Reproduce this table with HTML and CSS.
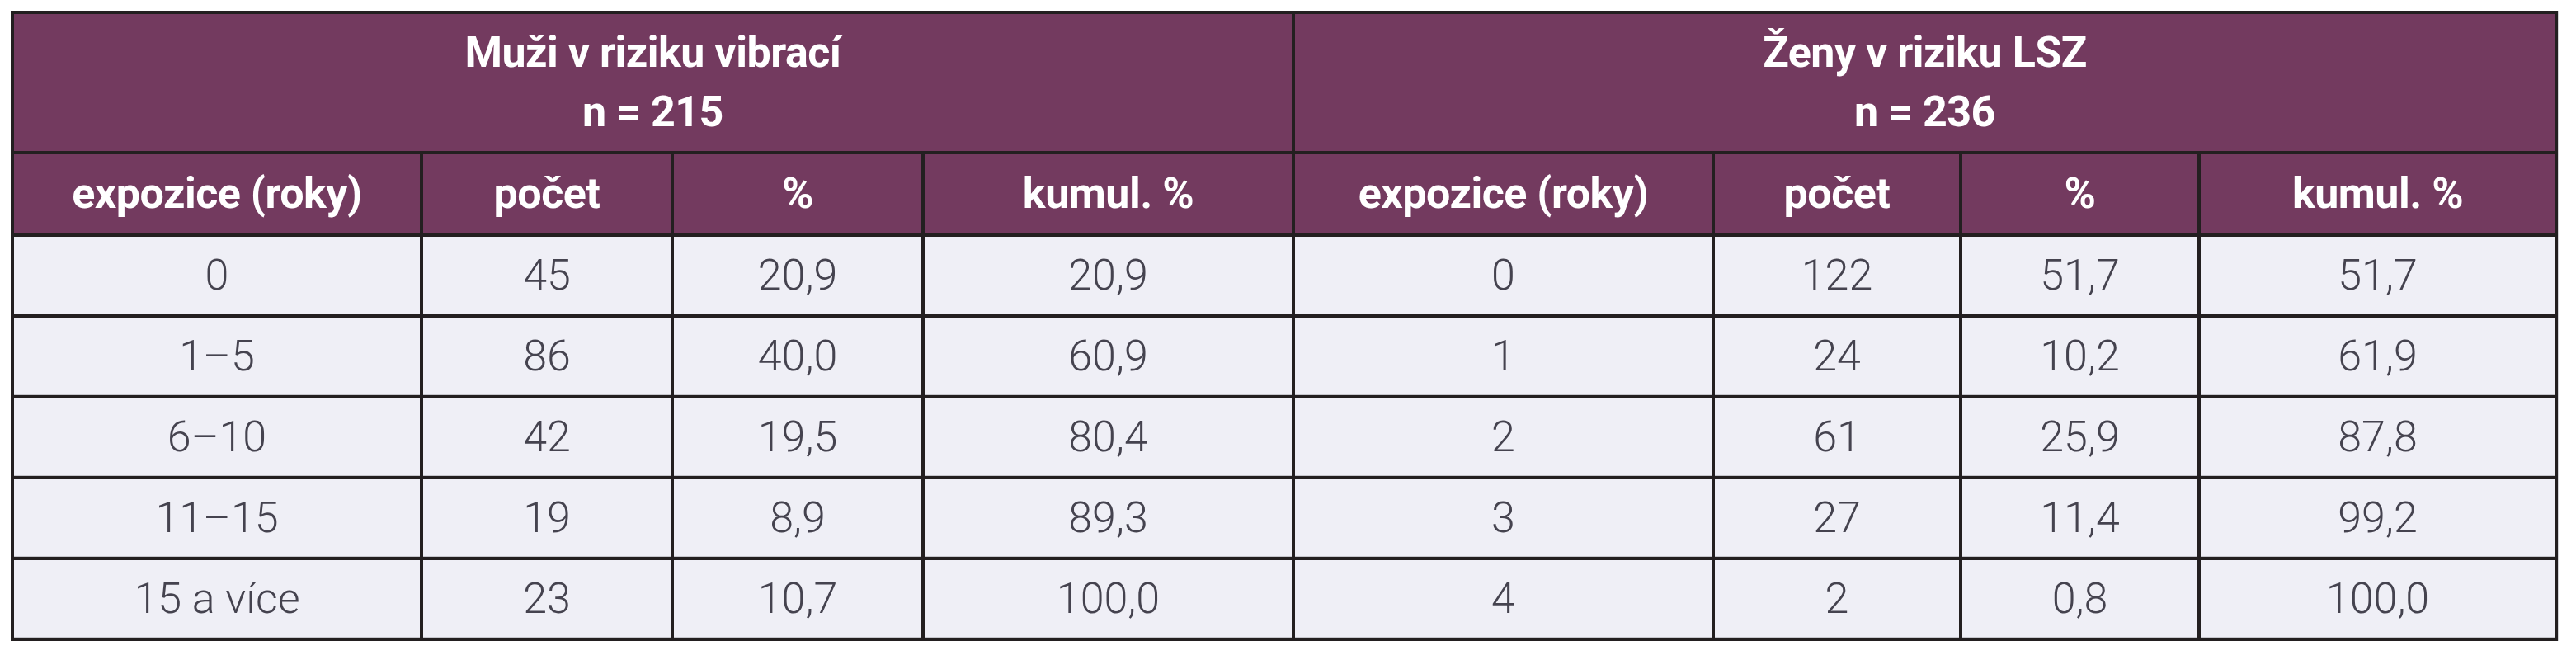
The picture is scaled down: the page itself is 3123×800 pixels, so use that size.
FILE: index.html
```html
<!DOCTYPE html>
<html lang="cs">
<head>
<meta charset="utf-8">
<title>Expozice</title>
<link rel="stylesheet" href="styles.css">
</head>
<body>
<table class="data-table">
  <colgroup>
    <col class="c1"><col class="c2"><col class="c3"><col class="c4">
    <col class="c5"><col class="c6"><col class="c7"><col class="c8">
  </colgroup>
  <thead>
    <tr class="group-row">
      <th colspan="4">Muži v riziku vibrací<br>n = 215</th>
      <th colspan="4">Ženy v riziku LSZ<br>n = 236</th>
    </tr>
    <tr class="head-row">
      <th>expozice (roky)</th><th>počet</th><th>%</th><th>kumul. %</th>
      <th>expozice (roky)</th><th>počet</th><th>%</th><th>kumul. %</th>
    </tr>
  </thead>
  <tbody>
    <tr><td>0</td><td>45</td><td>20,9</td><td>20,9</td><td>0</td><td>122</td><td>51,7</td><td>51,7</td></tr>
    <tr><td>1–5</td><td>86</td><td>40,0</td><td>60,9</td><td>1</td><td>24</td><td>10,2</td><td>61,9</td></tr>
    <tr><td>6–10</td><td>42</td><td>19,5</td><td>80,4</td><td>2</td><td>61</td><td>25,9</td><td>87,8</td></tr>
    <tr><td>11–15</td><td>19</td><td>8,9</td><td>89,3</td><td>3</td><td>27</td><td>11,4</td><td>99,2</td></tr>
    <tr><td>15 a více</td><td>23</td><td>10,7</td><td>100,0</td><td>4</td><td>2</td><td>0,8</td><td>100,0</td></tr>
  </tbody>
</table>
</body>
</html>
```

FILE: styles.css
```css
html, body {
  background: #ffffff;
}
body {
  margin: 13px;
  font-family: Roboto, "Liberation Sans", sans-serif;
}
.data-table {
  border-collapse: collapse;
  table-layout: fixed;
  width: 3088px;
  box-shadow: 0 0 0 1px #d4d4d8;
}
.c1 { width: 496px; }
.c2 { width: 304px; }
.c3 { width: 304px; }
.c4 { width: 449px; }
.c5 { width: 509px; }
.c6 { width: 300px; }
.c7 { width: 289px; }
.c8 { width: 433px; }

.data-table th,
.data-table td {
  border: 4px solid #231f20;
  padding: 0;
  text-align: center;
  vertical-align: middle;
  font-size: 52px;
}
.data-table th {
  background: #733a5f;
  color: #ffffff;
  font-weight: 700;
  letter-spacing: -0.5px;
}
.group-row th {
  height: 166px;
  line-height: 72px;
}
.head-row th {
  height: 96px;
  line-height: 60px;
}
.data-table td {
  background: #efeff6;
  color: #45434f;
  font-weight: 300;
  height: 94px;
  line-height: 60px;
  box-shadow: inset 0 -1px 0 #c6c6cc;
}
```
